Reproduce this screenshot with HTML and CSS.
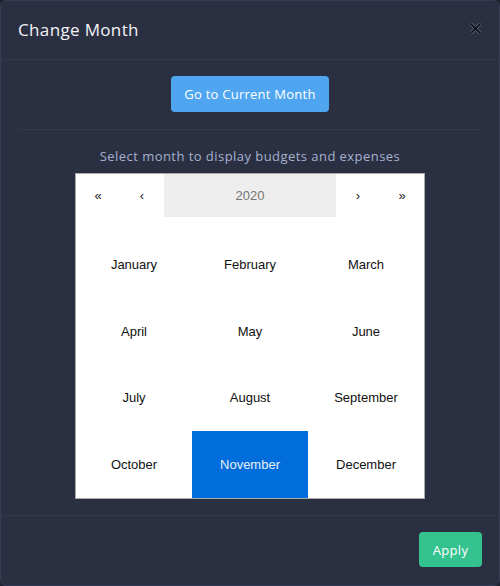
FILE: index.html
```html
<!DOCTYPE html>
<html>
<head>
<meta charset="utf-8">
<link rel="stylesheet" href="styles.css">
</head>
<body>
<div class="modal">
  <div class="modal-header">
    <h5 class="modal-title">Change Month</h5>
    <button class="btn-close" aria-label="Close">
      <svg width="11" height="11" viewBox="0 0 10 10"><path d="M1 1L9 9M9 1L1 9" stroke="#6a6f80" stroke-width="2.8" stroke-linecap="round"/><path d="M1 1L9 9M9 1L1 9" stroke="#0c0e15" stroke-width="1.6" stroke-linecap="round"/></svg>
    </button>
  </div>
  <div class="modal-body">
    <div class="center"><button class="btn btn-info">Go to Current Month</button></div>
    <hr class="divider">
    <p class="hint">Select month to display budgets and expenses</p>
    <div class="calendar">
      <div class="cal-head">
        <div class="nav">«</div>
        <div class="nav">‹</div>
        <div class="year">2020</div>
        <div class="nav">›</div>
        <div class="nav">»</div>
      </div>
      <div class="months">
        <div class="month">January</div>
        <div class="month">February</div>
        <div class="month">March</div>
        <div class="month">April</div>
        <div class="month">May</div>
        <div class="month">June</div>
        <div class="month">July</div>
        <div class="month">August</div>
        <div class="month">September</div>
        <div class="month">October</div>
        <div class="month active">November</div>
        <div class="month">December</div>
      </div>
    </div>
  </div>
  <div class="modal-footer">
    <button class="btn btn-success">Apply</button>
  </div>
</div>
</body>
</html>
```

FILE: styles.css
```css
* { box-sizing: border-box; }
html, body { margin: 0; padding: 0; }
body {
  background: #1e2230;
  width: 500px;
  height: 586px;
  font-family: "Open Sans", "Noto Sans", sans-serif;
}
.modal {
  width: 500px;
  height: 586px;
  background: #2a3042;
  border: 1px solid #353b52;
  border-radius: 6px;
  display: flex;
  flex-direction: column;
}
.modal-header {
  height: 59px;
  display: flex;
  align-items: center;
  justify-content: space-between;
  padding: 0 17px 0 17px;
  border-bottom: 1px solid #32394e;
}
.modal-title {
  margin: 0;
  font-size: 17px;
  font-weight: 500;
  color: #f3f3f6;
  letter-spacing: 0.35px;
  padding-bottom: 1px;
}
.btn-close {
  background: none;
  border: 0;
  padding: 0;
  width: 14px;
  height: 14px;
  display: flex;
  align-items: center;
  justify-content: center;
  margin-bottom: 3px;
}
.modal-body {
  padding: 16px 16px 16px;
  flex: none;
  border-bottom: 1px solid #32394e;
}
.center { display: flex; justify-content: center; }
.btn {
  border: 0;
  border-radius: 4px;
  color: #fff;
  font-family: "Open Sans", "Noto Sans", sans-serif;
  font-size: 13px;
  line-height: 20px;
  padding: 8px 12px;
  height: 36px;
}
.btn-info {
  background: #50a5f1;
  width: 158px;
  letter-spacing: 0.25px;
}
.btn-success {
  background: #34c38f;
  width: 63px;
  height: 35px;
  padding: 0;
  letter-spacing: 0.3px;
}
.divider {
  border: 0;
  border-top: 1px solid #32394e;
  margin: 17px 0 0;
  height: 0;
}
.hint {
  margin: 16px 0 7px;
  text-align: center;
  color: #a6b0cf;
  font-size: 13px;
  line-height: 20px;
  letter-spacing: 0.45px;
}
.calendar {
  width: 350px;
  margin: 0 auto;
  background: #fff;
  border: 1px solid #a9a9a9;
  font-family: "Liberation Sans", Arial, sans-serif;
  font-size: 13px;
  color: #111;
}
.cal-head {
  display: grid;
  grid-template-columns: 44px 44px 1fr 44px 44px;
  height: 43px;
}
.cal-head > div {
  display: flex;
  align-items: center;
  justify-content: center;
}
.nav { font-size: 13px; color: #222; }
.year { background: #eeeeee; color: #757575; }
.months {
  display: grid;
  grid-template-columns: repeat(3, 1fr);
  grid-auto-rows: 66.75px;
  padding-top: 14px;
}
.month {
  display: flex;
  align-items: center;
  justify-content: center;
}
.month.active {
  background: #016ddc;
  color: #e8f0fb;
}
.modal-footer {
  flex: 1;
  display: flex;
  justify-content: flex-end;
  align-items: flex-start;
  padding: 16px 17px;
}
```
